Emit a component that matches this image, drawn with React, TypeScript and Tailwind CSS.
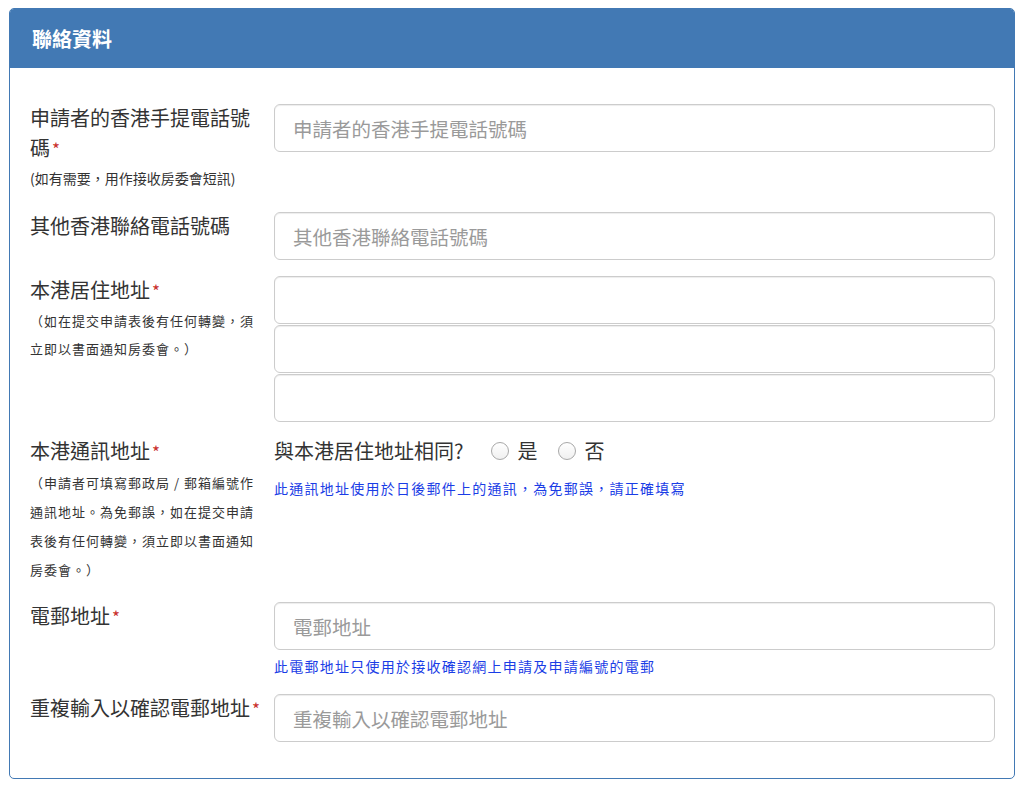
const font = { fontFamily: '"Noto Sans CJK TC", "Noto Sans", sans-serif' };

function Req() {
  return <span className="text-[#c9302c] text-[17px] leading-[0] ml-[2px]">*</span>;
}

function TextBox({ placeholder }: { placeholder?: string }) {
  return (
    <input
      type="text"
      placeholder={placeholder}
      className="w-full h-[48px] rounded-[6px] border border-[#cccccc] bg-white px-[18px] text-[19.5px] text-[#333] placeholder:text-[#9a9a9a] shadow-[inset_0_1px_1px_rgba(0,0,0,0.075)] outline-none"
      style={font}
    />
  );
}

function Radio({ label }: { label: string }) {
  return (
    <label className="flex items-center gap-[8px]">
      <span className="w-[18px] h-[18px] rounded-full border border-[#a8a8a8] bg-gradient-to-b from-white to-[#f0f0f0]" />
      <span className="text-[20px] text-[#333]">{label}</span>
    </label>
  );
}

function Row({ className, label, children }: any) {
  return (
    <div className={"flex items-start " + (className || "")}>
      <div className="w-[244px] shrink-0 pr-[12px] -mt-[1px]">{label}</div>
      <div className="flex-1 min-w-0">{children}</div>
    </div>
  );
}

export default function App() {
  return (
    <div className="bg-white min-h-[792px] pt-[8px] px-[9px]" style={font}>
      <div className="border border-[#4279b4] rounded-[5px] overflow-hidden">
        {/* header */}
        <div className="bg-[#4279b4] h-[59px] flex items-center px-[22px]">
          <span className="text-white text-[20px] font-bold">聯絡資料</span>
        </div>
        {/* body */}
        <div className="pt-[36px] pb-[36px] pl-[20px] pr-[19px] text-[#333]">
          <Row
            label={
              <>
                <div className="text-[20px] leading-[30px]">
                  申請者的香港手提電話號碼<Req />
                </div>
                <div className="text-[14px] leading-[20px] mt-[5px] whitespace-nowrap">(如有需要，用作接收房委會短訊)</div>
              </>
            }
          >
            <TextBox placeholder="申請者的香港手提電話號碼" />
          </Row>

          <Row className="mt-[24px]" label={<div className="text-[20px] leading-[30px]">其他香港聯絡電話號碼</div>}>
            <TextBox placeholder="其他香港聯絡電話號碼" />
          </Row>

          <Row
            className="mt-[16px]"
            label={
              <>
                <div className="text-[20px] leading-[30px]">
                  本港居住地址<Req />
                </div>
                <div className="text-[13px] leading-[28px] tracking-[1px] mt-[2px]">
                  （如在提交申請表後有任何轉變，須立即以書面通知房委會。）
                </div>
              </>
            }
          >
            <div className="flex flex-col gap-px">
              <TextBox />
              <TextBox />
              <TextBox />
            </div>
          </Row>

          <Row
            className="mt-[15px]"
            label={
              <>
                <div className="text-[20px] leading-[30px]">
                  本港通訊地址<Req />
                </div>
                <div className="text-[13px] leading-[29px] tracking-[1px] mt-[2px]">
                  （申請者可填寫郵政局 / 郵箱編號作通訊地址。為免郵誤，如在提交申請表後有任何轉變，須立即以書面通知房委會。）
                </div>
              </>
            }
          >
            <div className="flex items-center h-[30px] -mt-[1px]">
              <span className="text-[20px]">與本港居住地址相同?</span>
              <div className="flex items-center gap-[21px] ml-[28px]">
                <Radio label="是" />
                <Radio label="否" />
              </div>
            </div>
            <div className="text-[14px] leading-[20px] tracking-[1.25px] text-[#1a3de6] mt-[12px]">
              此通訊地址使用於日後郵件上的通訊，為免郵誤，請正確填寫
            </div>
          </Row>

          <Row
            className="mt-[18px]"
            label={
              <div className="text-[20px] leading-[30px]">
                電郵地址<Req />
              </div>
            }
          >
            <TextBox placeholder="電郵地址" />
            <div className="text-[14px] leading-[20px] tracking-[1.25px] text-[#1a3de6] mt-[6px]">
              此電郵地址只使用於接收確認網上申請及申請編號的電郵
            </div>
          </Row>

          <Row
            className="mt-[18px]"
            label={
              <div className="text-[20px] leading-[30px] whitespace-nowrap">
                重複輸入以確認電郵地址<Req />
              </div>
            }
          >
            <TextBox placeholder="重複輸入以確認電郵地址" />
          </Row>
        </div>
      </div>
    </div>
  );
}
